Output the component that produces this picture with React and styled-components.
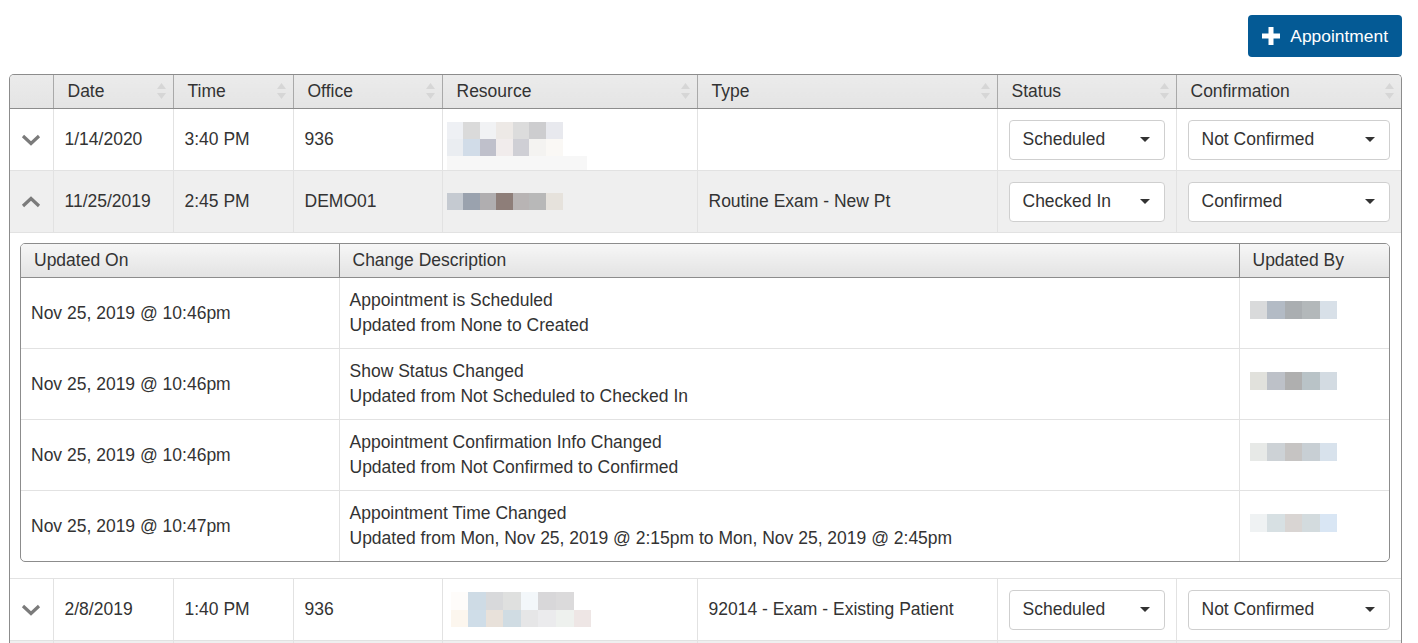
import React from "react"
import styled, { createGlobalStyle } from "styled-components"

const GlobalStyle = createGlobalStyle`
  html, body {
    margin: 0;
    padding: 0;
    overflow: hidden;
    background: #fff;
  }
  body {
    font-family: "Liberation Sans", Arial, sans-serif;
    color: #333;
  }
`

const appointments = [
  {
    date: "1/14/2020",
    time: "3:40 PM",
    office: "936",
    resource: {
      top: true,
      rows: [
        ["#eef0f4", "#dadada", "#f1f2f4", "#ede9e6", "#dcdcdc", "#cdcdcf", "#e8e9ee"],
        ["#eaedf1", "#d1dce8", "#bfc0cb", "#f1ecec", "#cfcfd5", "#f4f3f1", "#faf8f5"],
      ],
      strip: "#f7f7f7",
    },
    type: "",
    status: "Scheduled",
    confirmation: "Not Confirmed",
  },
  {
    date: "11/25/2019",
    time: "2:45 PM",
    office: "DEMO01",
    open: true,
    resource: {
      rows: [["#c5cad1", "#9aa2ae", "#b0aeb0", "#8e7e79", "#b8b4b4", "#b8b8b8", "#e6e2dc"]],
    },
    type: "Routine Exam - New Pt",
    status: "Checked In",
    confirmation: "Confirmed",
  },
  {
    date: "2/8/2019",
    time: "1:40 PM",
    office: "936",
    resource: {
      wide: true,
      rows: [
        ["#fefcfa", "#cedbe5", "#d8d9db", "#dfe0df", "#f3f7fa", "#d8d7d9", "#dbdadb"],
        ["#fcf6ee", "#cfdde8", "#e8e1da", "#d0dce3", "#e6e6e7", "#ebebed", "#eef1ee", "#eee6e5"],
      ],
    },
    type: "92014 - Exam - Existing Patient",
    status: "Scheduled",
    confirmation: "Not Confirmed",
  },
]

const history = [
  {
    on: "Nov 25, 2019 @ 10:46pm",
    title: "Appointment is Scheduled",
    detail: "Updated from None to Created",
    by: ["#d9dadb", "#b3bbc5", "#aaaeb1", "#b3b8ba", "#d8e0e8"],
  },
  {
    on: "Nov 25, 2019 @ 10:46pm",
    title: "Show Status Changed",
    detail: "Updated from Not Scheduled to Checked In",
    by: ["#e1e1dc", "#bdc1c8", "#afafaf", "#b9c3c7", "#d3dbe2"],
  },
  {
    on: "Nov 25, 2019 @ 10:46pm",
    title: "Appointment Confirmation Info Changed",
    detail: "Updated from Not Confirmed to Confirmed",
    by: ["#e7e9e7", "#cdd2d6", "#c6c4c3", "#c8cfd4", "#d8e2ec"],
  },
  {
    on: "Nov 25, 2019 @ 10:47pm",
    title: "Appointment Time Changed",
    detail: "Updated from Mon, Nov 25, 2019 @ 2:15pm to Mon, Nov 25, 2019 @ 2:45pm",
    by: ["#eff2f3", "#d7e0e3", "#d9d5d3", "#d3dbde", "#d9e6f4"],
  },
]

const columns = [
  { label: "", width: 43 },
  { label: "Date", width: 120 },
  { label: "Time", width: 120 },
  { label: "Office", width: 149 },
  { label: "Resource", width: 255 },
  { label: "Type", width: 300 },
  { label: "Status", width: 179 },
  { label: "Confirmation" },
]

function PlusIcon() {
  return (
    <svg width="18" height="18" viewBox="0 0 18 18">
      <rect x="6.5" y="0" width="5" height="18" fill="#fff" />
      <rect x="0" y="6.5" width="18" height="5" fill="#fff" />
    </svg>
  )
}

function Chevron({ up }) {
  return (
    <svg width="20" height="12" viewBox="0 0 20 12">
      <polyline
        points={up ? "2,10 10,2.5 18,10" : "2,2 10,9.5 18,2"}
        fill="none"
        stroke="#7b7b7b"
        strokeWidth="3.2"
      />
    </svg>
  )
}

function SortIcon() {
  return (
    <SortWrap viewBox="0 0 9 16" width="9" height="16">
      <polygon points="4.5,0 9,6 0,6" fill="#d6d6d6" />
      <polygon points="0,10 9,10 4.5,16" fill="#d6d6d6" />
    </SortWrap>
  )
}

function Caret() {
  return (
    <svg width="10" height="5" viewBox="0 0 10 5">
      <polygon points="0,0 10,0 5,5" fill="#333" />
    </svg>
  )
}

function Redacted({ rows, strip, cell = 16.6, height = 17 }) {
  return (
    <RedactBox>
      {rows.map((row, i) => (
        <RedactRow key={i}>
          {row.map((c, j) => (
            <RedactCell key={j} $w={cell} $h={height} style={{ background: c }} />
          ))}
        </RedactRow>
      ))}
      {strip && <RedactStrip $color={strip} />}
    </RedactBox>
  )
}

function Select({ value }) {
  return (
    <SelectBox>
      <span>{value}</span>
      <Caret />
    </SelectBox>
  )
}

function HistoryTable() {
  return (
    <InnerFrame>
      <InnerTable>
        <colgroup>
          <col style={{ width: 318 }} />
          <col style={{ width: 900 }} />
          <col />
        </colgroup>
        <thead>
          <tr>
            <InnerTh>Updated On</InnerTh>
            <InnerTh>Change Description</InnerTh>
            <InnerTh>Updated By</InnerTh>
          </tr>
        </thead>
        <tbody>
          {history.map((h, i) => (
            <InnerRow key={i}>
              <InnerTd>{h.on}</InnerTd>
              <InnerTd>
                <div>{h.title}</div>
                <div>{h.detail}</div>
              </InnerTd>
              <ByCell>
                <Redacted rows={[h.by]} cell={17.6} height={18} />
              </ByCell>
            </InnerRow>
          ))}
        </tbody>
      </InnerTable>
    </InnerFrame>
  )
}

export default function App() {
  return (
    <Page>
      <GlobalStyle />
      <TopBar>
        <AddButton>
          <PlusIcon />
          Appointment
        </AddButton>
      </TopBar>
      <TableFrame>
        <Table>
          <colgroup>
            {columns.map((c, i) => (
              <col key={i} style={c.width ? { width: c.width } : undefined} />
            ))}
          </colgroup>
          <thead>
            <tr>
              {columns.map((c, i) => (
                <Th key={i}>
                  {c.label}
                  {c.label && <SortIcon />}
                </Th>
              ))}
            </tr>
          </thead>
          <tbody>
            {appointments.map((a, i) => (
              <React.Fragment key={i}>
                <Row $shaded={a.open}>
                  <ToggleCell>
                    <Chevron up={a.open} />
                  </ToggleCell>
                  <Td>{a.date}</Td>
                  <Td>{a.time}</Td>
                  <Td>{a.office}</Td>
                  <ResourceCell $top={a.resource.top} $wide={a.resource.wide}>
                    <Redacted
                      rows={a.resource.rows}
                      strip={a.resource.strip}
                      cell={a.resource.wide ? 17.6 : 16.6}
                      height={a.resource.wide ? 17.5 : 17}
                    />
                  </ResourceCell>
                  <Td>{a.type}</Td>
                  <SelectCell>
                    <Select value={a.status} />
                  </SelectCell>
                  <SelectCell>
                    <Select value={a.confirmation} />
                  </SelectCell>
                </Row>
                {a.open && (
                  <tr>
                    <DetailCell colSpan={8}>
                      <HistoryTable />
                    </DetailCell>
                  </tr>
                )}
              </React.Fragment>
            ))}
            <Row $shaded>
              {columns.map((c, i) => (
                <Td key={i} />
              ))}
            </Row>
          </tbody>
        </Table>
      </TableFrame>
    </Page>
  )
}

const Page = styled.div`
  padding: 15px 16px 0 9px;
  font-size: 17.5px;
`

const TopBar = styled.div`
  display: flex;
  justify-content: flex-end;
`

const AddButton = styled.button`
  display: flex;
  align-items: center;
  gap: 10px;
  height: 42px;
  padding: 0 14px;
  background: #045a95;
  color: #fff;
  border: none;
  border-radius: 4px;
  font-family: "Liberation Sans", Arial, sans-serif;
  font-size: 17.4px;
  cursor: pointer;
`

const TableFrame = styled.div`
  margin-top: 17px;
  border: 1px solid #8c8c8c;
  border-bottom: none;
  border-radius: 5px 5px 0 0;
  overflow: hidden;
`

const Table = styled.table`
  width: 100%;
  border-collapse: collapse;
  table-layout: fixed;
`

const Th = styled.th`
  position: relative;
  height: 33px;
  padding: 0 14px;
  background: linear-gradient(#ebebeb, #e4e4e4);
  border-left: 1px solid #a9a9a9;
  border-bottom: 1px solid #8c8c8c;
  text-align: left;
  font-weight: normal;
  color: #333;

  &:first-child {
    border-left: none;
  }
`

const SortWrap = styled.svg`
  position: absolute;
  right: 7px;
  top: 8px;
`

const Row = styled.tr`
  background: ${(p) => (p.$shaded ? "#efefef" : "#fff")};
`

const Td = styled.td`
  height: 61px;
  padding: 0 11px;
  border-left: 1px solid #e2e2e2;
  border-bottom: 1px solid #e2e2e2;
  color: #333;
  white-space: nowrap;

  &:first-child {
    border-left: none;
  }
`

const ToggleCell = styled(Td)`
  padding: 0;
  text-align: center;
  line-height: 0;
`

const ResourceCell = styled(Td)`
  height: ${(p) => (p.$top ? "auto" : "61px")};
  padding: ${(p) => (p.$top ? "13px 4px 0" : p.$wide ? "0 8px" : "0 4px")};
  vertical-align: ${(p) => (p.$top ? "top" : "middle")};
  overflow: hidden;
`

const SelectCell = styled(Td)`
  padding: 0 11px;
`

const SelectBox = styled.div`
  display: flex;
  align-items: center;
  justify-content: space-between;
  height: 38px;
  padding: 0 14px 0 13px;
  background: #fff;
  border: 1px solid #cfcfcf;
  border-radius: 4px;
  color: #333;
`

const RedactBox = styled.div`
  display: flex;
  flex-direction: column;
`

const RedactRow = styled.div`
  display: flex;
`

const RedactCell = styled.span`
  width: ${(p) => p.$w}px;
  height: ${(p) => p.$h}px;
`

const RedactStrip = styled.div`
  width: 140px;
  height: 14px;
  background: ${(p) => p.$color};
`

const DetailCell = styled.td`
  padding: 10px 11px 16px 10px;
  background: #fff;
  border-bottom: 1px solid #e2e2e2;
`

const InnerFrame = styled.div`
  border: 1px solid #8c8c8c;
  border-radius: 5px;
  overflow: hidden;
`

const InnerTable = styled.table`
  width: 100%;
  border-collapse: collapse;
  table-layout: fixed;
`

const InnerTh = styled.th`
  height: 33px;
  padding: 0 13px;
  background: linear-gradient(#f6f6f6, #e3e3e3);
  border-left: 1px solid #8c8c8c;
  border-bottom: 1px solid #8c8c8c;
  text-align: left;
  font-weight: normal;
  color: #333;

  &:first-child {
    border-left: none;
  }
`

const InnerRow = styled.tr`
  &:last-child td {
    border-bottom: none;
  }
`

const InnerTd = styled.td`
  height: 70px;
  padding: 0 10px;
  line-height: 25px;
  border-left: 1px solid #e2e2e2;
  border-bottom: 1px solid #e2e2e2;
  color: #333;
  white-space: nowrap;

  &:first-child {
    border-left: none;
  }
`

const ByCell = styled(InnerTd)`
  height: 64px;
  padding: 0 10px 6px;
`
